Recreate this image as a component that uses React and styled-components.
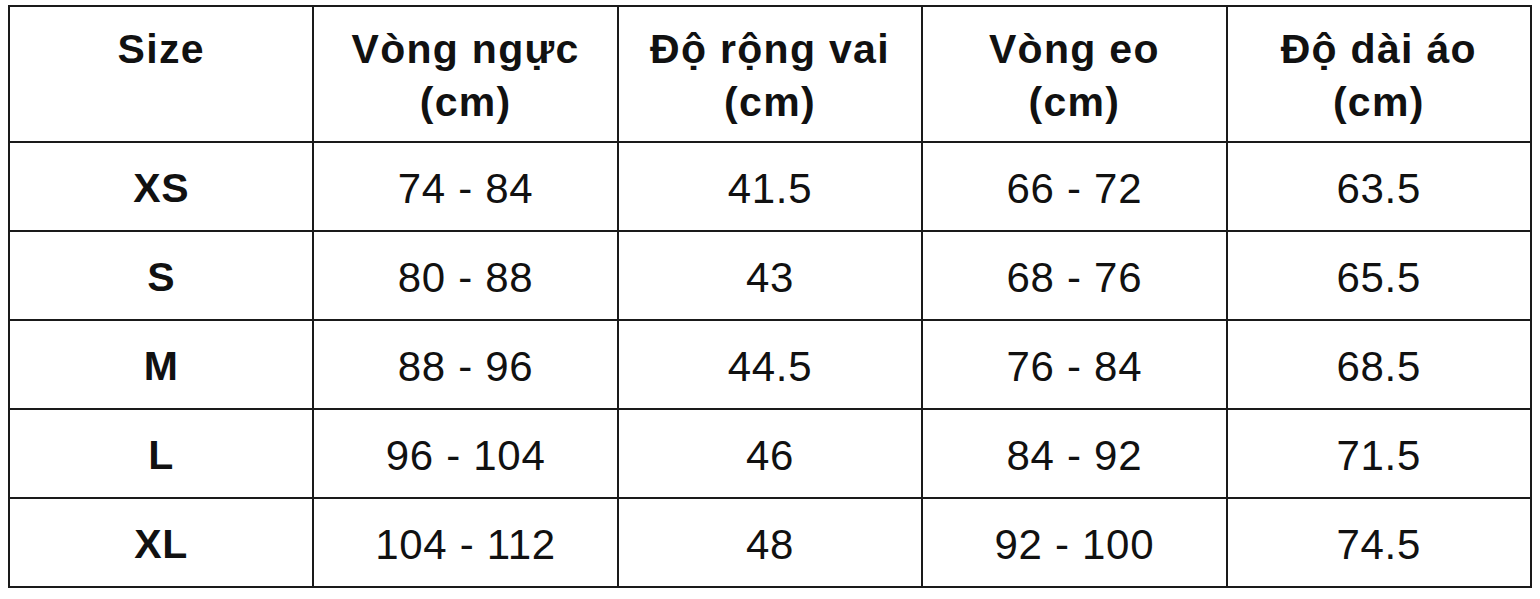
import React from 'react';
import styled, {createGlobalStyle} from 'styled-components';

const GlobalStyle = createGlobalStyle`
  html, body {
    margin: 0;
    background: #fff;
  }
  body {
    font-family: "Liberation Sans", Arial, sans-serif;
    color: #111;
  }
`;

const Page = styled.div`
  padding: 5px 8px 0 8px;
`;

const Table = styled.table`
  width: 1524px;
  border-collapse: collapse;
  table-layout: fixed;
  border: 2px solid #1a1a1a;
`;

const HeadCell = styled.th`
  width: 20%;
  height: 118px;
  padding: 16px 8px 0;
  vertical-align: top;
  border: 2px solid #1a1a1a;
  font-size: 41px;
  font-weight: 700;
  letter-spacing: 1.3px;
  line-height: 53px;
  text-align: center;
`;

const Cell = styled.td`
  height: 83px;
  padding: 4px 8px 0;
  border: 2px solid #1a1a1a;
  font-size: ${p => (p.$bold ? 41 : 42)}px;
  font-weight: ${p => (p.$bold ? 700 : 400)};
  letter-spacing: 0.7px;
  text-align: center;
  vertical-align: middle;
`;

const columns = [
  ['Size'],
  ['Vòng ngực', '(cm)'],
  ['Độ rộng vai', '(cm)'],
  ['Vòng eo', '(cm)'],
  ['Độ dài áo', '(cm)'],
];

const rows = [
  ['XS', '74 - 84', '41.5', '66 - 72', '63.5'],
  ['S', '80 - 88', '43', '68 - 76', '65.5'],
  ['M', '88 - 96', '44.5', '76 - 84', '68.5'],
  ['L', '96 - 104', '46', '84 - 92', '71.5'],
  ['XL', '104 - 112', '48', '92 - 100', '74.5'],
];

const App = () => (
  <>
    <GlobalStyle/>
    <Page>
      <Table>
        <thead>
          <tr>
            {columns.map((lines, i) => (
              <HeadCell key={i}>
                {lines.map((l, j) => (
                  <div key={j}>{l}</div>
                ))}
              </HeadCell>
            ))}
          </tr>
        </thead>
        <tbody>
          {rows.map(r => (
            <tr key={r[0]}>
              {r.map((v, i) => (
                <Cell key={i} $bold={i === 0}>{v}</Cell>
              ))}
            </tr>
          ))}
        </tbody>
      </Table>
    </Page>
  </>
);

export default App;
